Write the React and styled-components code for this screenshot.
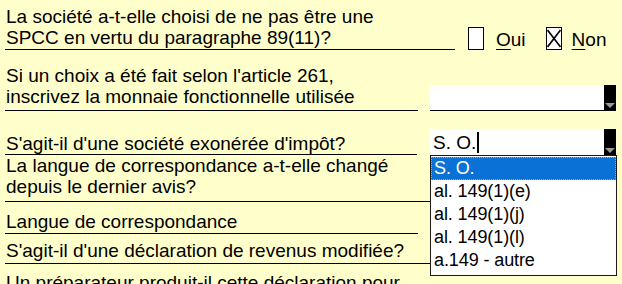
import React from "react";
import styled, { createGlobalStyle } from "styled-components";

const GlobalStyle = createGlobalStyle`
  html, body {
    margin: 0;
    padding: 0;
    background: #ffffcc;
  }
  body {
    width: 622px;
    height: 284px;
    overflow: hidden;
    font-family: "Liberation Sans", Arial, sans-serif;
  }
`;

const Form = styled.div`
  padding-left: 5px;
  color: #000;
  font-size: 19px;
  line-height: 21px;
`;

const Row = styled.div`
  display: flex;
  align-items: flex-end;
  height: ${(p) => p.$h}px;
`;

const Label = styled.div`
  box-sizing: border-box;
  height: 100%;
  width: ${(p) => p.$w}px;
  flex-shrink: 0;
  display: flex;
  flex-direction: column;
  justify-content: ${(p) => (p.$open ? "flex-start" : "flex-end")};
  padding: ${(p) => p.$pt || 0}px 0 ${(p) => p.$pb || 0}px 1px;
  border-bottom: ${(p) => (p.$open ? "none" : "1px solid #000")};
  white-space: nowrap;
`;

const Choices = styled.div`
  display: flex;
  align-items: flex-end;
  margin-left: 13px;
`;

const Box = styled.div`
  width: 16px;
  height: 23px;
  box-sizing: border-box;
  border: 1px solid #000;
  background: #fff;
  margin-left: ${(p) => p.$ml || 0}px;
  display: flex;
`;

const ChoiceText = styled.span`
  margin-left: ${(p) => p.$ml}px;
`;

const Key = styled.span`
  text-decoration: underline;
  text-underline-offset: 3px;
  text-decoration-thickness: 1px;
`;

const Combo = styled.div`
  position: relative;
  display: flex;
  width: 186px;
  height: 26px;
  box-sizing: border-box;
  margin-left: ${(p) => p.$ml}px;
  background: #fff;
  border-bottom: ${(p) => (p.$line ? "1px solid #000" : "none")};
`;

const ComboText = styled.div`
  flex: 1;
  display: flex;
  align-items: center;
  padding-left: 3px;
  font-size: 19px;
`;

const Caret = styled.span`
  display: inline-block;
  width: 2px;
  height: 21px;
  margin-left: 1px;
  background: #000;
`;

const DropButton = styled.div`
  width: 12px;
  background: #000;
  display: flex;
  align-items: flex-end;
  justify-content: center;
  padding-bottom: 2px;
  box-sizing: border-box;
`;

const Arrow = styled.span`
  width: 0;
  height: 0;
  border-left: 5px solid transparent;
  border-right: 5px solid transparent;
  border-top: 5px solid #9a9a9a;
`;

const List = styled.ul`
  position: absolute;
  top: 100%;
  left: 0;
  width: 187px;
  height: 121px;
  box-sizing: border-box;
  margin: 0;
  padding: 1px 0 0;
  list-style: none;
  background: #fff;
  border: 1px solid #1a1a1a;
  z-index: 2;
`;

const Item = styled.li`
  height: 23px;
  line-height: 23px;
  padding-left: 3px;
  font-size: 18px;
  letter-spacing: -0.1px;
  background: ${(p) => (p.$sel ? "#0a72d6" : "transparent")};
  color: ${(p) => (p.$sel ? "#fff" : "#000")};
  outline: ${(p) => (p.$sel ? "1px dotted #f29a2e" : "none")};
  outline-offset: -1px;
`;

const Cross = () => (
  <svg width="14" height="21" viewBox="0 0 14 21">
    <path d="M0.5 2 L13.5 19 M13.5 2 L0.5 19" stroke="#000" strokeWidth="1.6" fill="none" />
  </svg>
);

const options = ["S. O.", "al. 149(1)(e)", "al. 149(1)(j)", "al. 149(1)(l)", "a.149 - autre"];

const Dropdown = ({ value, open, line, ml }) => (
  <Combo $line={line} $ml={ml}>
    <ComboText>
      {value}
      {open && <Caret />}
    </ComboText>
    <DropButton>
      <Arrow />
    </DropButton>
    {open && (
      <List>
        {options.map((o) => (
          <Item key={o} $sel={o === value}>
            {o}
          </Item>
        ))}
      </List>
    )}
  </Combo>
);

export default function App() {
  return (
    <>
      <GlobalStyle />
      <Form>
        <Row $h={50}>
          <Label $w={450} $pb={1}>
            <div>La société a-t-elle choisi de ne pas être une</div>
            <div>SPCC en vertu du paragraphe 89(11)?</div>
          </Label>
          <Choices>
            <Box />
            <ChoiceText $ml={12}>
              <Key>O</Key>ui
            </ChoiceText>
            <Box $ml={20}>
              <Cross />
            </Box>
            <ChoiceText $ml={10}>
              <Key>N</Key>on
            </ChoiceText>
          </Choices>
        </Row>

        <Row $h={61}>
          <Label $w={413} $pb={3}>
            <div>Si un choix a été fait selon l'article 261,</div>
            <div>inscrivez la monnaie fonctionnelle utilisée</div>
          </Label>
          <Dropdown value="" line ml={12} />
        </Row>

        <Row $h={44}>
          <Label $w={412}>
            <div>S'agit-il d'une société exonérée d'impôt?</div>
          </Label>
          <Dropdown value="S. O." open ml={13} />
        </Row>

        <Row $h={47}>
          <Label $w={450} $pb={4}>
            <div>La langue de correspondance a-t-elle changé</div>
            <div>depuis le dernier avis?</div>
          </Label>
        </Row>

        <Row $h={32}>
          <Label $w={413} $pb={1}>
            <div>Langue de correspondance</div>
          </Label>
        </Row>

        <Row $h={30}>
          <Label $w={450} $pb={2}>
            <div>S'agit-il d'une déclaration de revenus modifiée?</div>
          </Label>
        </Row>

        <Row $h={40}>
          <Label $w={450} $open $pt={8}>
            <div>Un préparateur produit-il cette déclaration pour</div>
          </Label>
        </Row>
      </Form>
    </>
  );
}
